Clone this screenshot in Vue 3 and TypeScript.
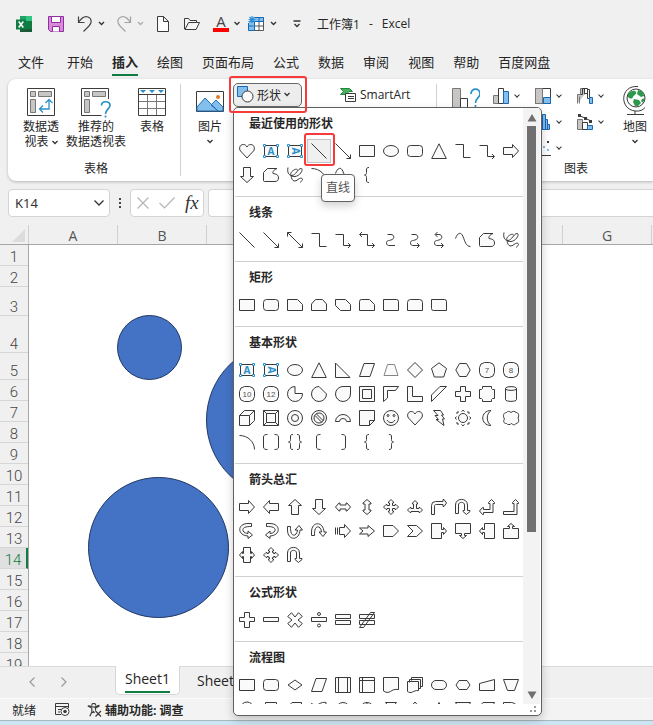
<script setup lang="ts">
import { ref } from 'vue'

interface Shape {
  label: string
  d: string
  turn?: string
  kind?: 'open' | 'box' | 'vbox' | 'soft'
  num?: string
}

const RECT = 'M.5 2.5h15v11h-15z'
const ROUND = 'M3.5 2.5h9a3 3 0 0 1 3 3v5a3 3 0 0 1-3 3h-9a3 3 0 0 1-3-3v-5a3 3 0 0 1 3-3z'
const OCT = 'M5.5.5h5l3.500 1.500 1.500 3.500v5l-1.500 3.500-3.500 1.500h-5L2 14 .5 10.500v-5L2 2z'
const CROSS = 'M5.5.5h5v5h5v5h-5v5h-5v-5h-5v-5h5z'
const ARROW = 'M.5 4.5h9v-3l6 6.5-6 6.5v-3h-9z'
const TWO_WAY = 'M.5 8L4 4h1v2h6V4h1l3.500 4-3.500 4h-1v-2H5v2H4z'
const UTURN = 'M.5 14.5V6c0-7.500 12-7.500 12 0v5.500H15v1l-3.500 3-3.500-3v-1h1.500V6c0-3.500-6-3.500-6 0v8.500z'
const CALLOUT = 'M.5.5h10v6h2v-2l3 3.5-3 3.5v-2h-2v6H.5z'
const CURVED = 'M12.5.5H9C-2 .5-2 12.500 9 13v2.500L13.500 12 9 8v2.500C3.500 10 2.500 6 5.500 4.500 7.500 3.500 10 3.500 12.500 3.500z'
const HEART = 'M8 15L1.500 8C-.5 5.500 1 1.500 4.200 1.500 6 1.500 7.300 2.500 8 4 8.700 2.500 10 1.500 11.800 1.500 15 1.500 16.500 5.500 14.500 8z'
const CIRCLE = 'M.5 8a7.500 7.500 0 1 0 15 0a7.500 7.500 0 1 0-15 0z'
const S_CURVE = 'M4.500 2.500H8c3.500 0 4 4.500 0 5.500s-4.500 1-4.500 3 1.500 2.500 2.500 2.500H12'

const s = (label: string, d: string, kind?: Shape['kind'], turn?: string, num?: string): Shape => ({ label, d, kind, turn, num })

const heart = s('心形', HEART)
const box = s('文本框', '', 'box')
const vbox = s('竖排文本框', '', 'vbox')
const line = s('直线', 'M.5.5l15 15', 'open')
const lineArrow = s('直线箭头', 'M.5.5l15 15M15.500 11.500v4h-4', 'open')
const rect = s('矩形', RECT)
const ellipse = s('椭圆', 'M.5 8a7.500 5.500 0 1 0 15 0a7.500 5.500 0 1 0-15 0z')
const rounded = s('圆角矩形', ROUND)
const triangle = s('等腰三角形', 'M8 .8l7.300 14.700H.7z')
const elbow = s('连接符: 肘形', 'M.5 1.500h8v13h7', 'open')
const elbowArrow = s('连接符: 肘形箭头', 'M.5 2.500h8v11h6.500M13 11l2.500 2.500-2.500 2.500', 'open')
const right = s('箭头: 右', ARROW)
const down = s('箭头: 下', ARROW, undefined, 'rotate(90 8 8)')
const freeform = s('任意多边形: 形状', 'M.5 5.500l4-4h9.500C10.500 3 9.500 5 10 6.500c3 .5 5.500 1 5.500 4.500 0 2.500-1.500 3.500-3.500 3.500H1.500a1 1 0 0 1-1-1z')
const scribble = s('任意多边形: 自由曲线', 'M1 .5C0 5 1.500 8.500 5 8.500S11 1.500 14 1.500 13.500 9 8 9.500 3 6 5.500 4 10 1.500 11 3.500M4 8.500c1 7 4.500 6 7 4s4.500-1.500 4.500 0-2 1.500-2 3', 'open')
const arc = s('弧形', 'M.5 1.500C9 1.500 15.500 8 15.500 15.500', 'open')
const curve = s('曲线', 'M.5 6.500C2.500.5 6-.5 8 4.500S11 14.500 15.500 14.500', 'open')
const leftBrace = s('左大括号', 'M10 .5C7.500.5 7.500 1.500 7.500 3v2.500c0 1.500-.5 2.500-2 2.500 1.500 0 2 1 2 2.500V13c0 1.500 0 2.500 2.500 2.500', 'open')
const rightBrace = s('右大括号', leftBrace.d, 'open', 'rotate(180 8 8)')
const uturn = s('箭头: 手杖形', UTURN)

const sections: { title: string; shapes: Shape[] }[] = [
  {
    title: '最近使用的形状',
    shapes: [heart, box, vbox, line, lineArrow, rect, ellipse, rounded, triangle, elbow, elbowArrow, right,
      down, freeform, scribble, arc, curve, leftBrace],
  },
  {
    title: '线条',
    shapes: [line, lineArrow,
      s('双箭头直线', 'M.5.5l15 15M15.500 11.500v4h-4M.5 4.500v-4h4', 'open'),
      elbow, elbowArrow,
      s('连接符: 肘形双箭头', 'M1 2.500h7.500v11h6.500M13 11l2.500 2.500-2.500 2.500M3 0L.5 2.500 3 5', 'open'),
      s('连接符: 曲线', S_CURVE, 'open'),
      s('连接符: 曲线箭头', S_CURVE + 'M10 11l2.500 2.500L10 16', 'open'),
      s('连接符: 曲线双箭头', S_CURVE + 'M10 11l2.500 2.500L10 16M6.500 0L4 2.500 6.500 5', 'open'),
      curve, freeform, scribble],
  },
  {
    title: '矩形',
    shapes: [rect, rounded,
      s('剪去单角', 'M.5 2.500h10l5 5v6h-15z'),
      s('剪去顶角', 'M4.500 2.500h7l4 4.500v6.500H.5V7z'),
      s('剪去对角', 'M.5 2.500h10l5 5v6h-10l-5-5z'),
      s('一个圆顶角,剪去另一个顶角', 'M2.500 2.500h8l5 5v6h-15v-9a2 2 0 0 1 2-2z'),
      s('单圆角', 'M.5 2.500h13a2 2 0 0 1 2 2v9h-15z'),
      s('圆顶角', 'M3.500 2.500h9a3 3 0 0 1 3 3v8H.5v-8a3 3 0 0 1 3-3z'),
      s('对角圆角', 'M.5 2.500h13a2 2 0 0 1 2 2v9h-13a2 2 0 0 1-2-2z')],
  },
  {
    title: '基本形状',
    shapes: [box, vbox, ellipse, triangle,
      s('直角三角形', 'M.5 1v14.500h14.500z'),
      s('平行四边形', 'M5 1.500h10.500l-4.500 13H.5z'),
      s('梯形', 'M4.500 2.500h7l3.500 11H1z', 'soft'),
      s('菱形', 'M8 .5L15.500 8 8 15.500.5 8z'),
      s('五边形', 'M8 .8l7.500 5.700L12.700 15H3.300L.5 6.500z'),
      s('六边形', 'M4.500 1.500h7L15.200 8l-3.700 6.500h-7L.8 8z'),
      s('七边形', OCT, undefined, undefined, '7'),
      s('八边形', OCT, undefined, undefined, '8'),
      s('十边形', OCT, undefined, undefined, '10'),
      s('十二边形', OCT, undefined, undefined, '12'),
      s('不完整圆', 'M8 7.500h7.500A7.500 7.500 0 1 1 8 .5z'),
      s('弦形', 'M8 .5l7.500 7.500A7.500 7.500 0 1 1 8 .5z'),
      s('泪滴形', 'M8 .5h7.500V8A7.500 7.500 0 1 1 8 .5z'),
      s('图文框', 'M.5.5h15v15H.5zM3.500 3.500h9v9h-9z'),
      s('半闭框', 'M.5.5h15l-3 4H4.500V12l-4 3.500z'),
      s('L 形', 'M.5.5h5v10h10v5H.5z'),
      s('斜纹', 'M9 .5h6.500L.5 15.500V9z'),
      s('十字形', CROSS),
      s('缺角矩形', 'M3.500.5h9v2l1 1h2v9h-2l-1 1v2h-9v-2l-1-1h-2v-9h2l1-1z'),
      s('圆柱体', 'M2.500 2.500v11c0 2.500 11 2.500 11 0v-11c0-2.500-11-2.500-11 0c0 2.500 11 2.500 11 0'),
      s('立方体', 'M.5 5.500l5-5h10v10l-5 5H.5zM.5 5.500h10v10M10.500 5.500l5-5'),
      s('棱台', 'M.5.5h15v15H.5zM3.500 3.500h9v9h-9zM.5.5l3 3M15.500.5l-3 3M.5 15.500l3-3M15.500 15.500l-3-3'),
      s('圆: 空心', CIRCLE + 'M4.500 8a3.500 3.500 0 1 0 7 0a3.500 3.500 0 1 0-7 0z'),
      s('禁止符', CIRCLE + 'M3 8a5 5 0 1 0 10 0a5 5 0 1 0-10 0zM4 5.500L11 12.500M5.500 4L12.500 11'),
      s('空心弧', 'M.5 11.500a7.500 7 0 0 1 15 0h-4a3.500 3 0 0 0-7 0z'),
      s('矩形: 折角', 'M.5.5h15v10l-5 5H.5zM10.500 15.500v-5h5'),
      s('笑脸', CIRCLE + 'M4 5.500a1 1 0 1 0 2 0a1 1 0 1 0-2 0zM10 5.500a1 1 0 1 0 2 0a1 1 0 1 0-2 0zM4 10c2 3.500 6 3.500 8 0'),
      heart,
      s('闪电形', 'M6 .5h3.500l3 4.500h-2l3 4h-2l1.500 6.500L5 9.500h2.500L4 5.500h3L2.500.5z'),
      s('太阳形', 'M3.500 8a4.500 4.500 0 1 0 9 0a4.500 4.500 0 1 0-9 0zM6.500 1.500L8 .2l1.500 1.300M6.500 14.500L8 15.800l1.500-1.300M1.500 6.500L.2 8l1.300 1.500M14.500 6.500L15.800 8l-1.300 1.500M2 4V2h2M12 2h2v2M2 12v2h2M12 14h2v-2'),
      s('新月形', 'M12 .5C7 4 7 12 12 15.500 1 15.500 1 .5 12 .5z'),
      s('云形', 'M3.500 13.500C.5 13.500 0 11 1.500 9-.5 6 .5 2.500 3.500 2.500c1-1.500 3-1.500 4.500 0 1.500-1.500 4-1.500 5 0 2.500 0 3.500 3 2 5.500 1.500 2.500.5 5.500-2 5.500-1 2-3 1.500-4.500 0-1.500 1.500-4 1.500-5 0z'),
      arc,
      s('双括号', 'M4.500.5C2 .5.500 1 .500 3v10c0 2 1.500 2.500 4 2.500M11.500.5c2.500 0 4 .5 4 2.500v10c0 2-1.500 2.500-4 2.500', 'open'),
      s('双大括号', 'M6 .5C3.500.5 3.500 1.500 3.500 3v2.500C3.500 7 3 8 1.500 8c1.500 0 2 1 2 2.500V13c0 1.500 0 2.500 2.500 2.500M10 .5c2.500 0 2.500 1 2.500 2.500v2.500c0 1.500.5 2.500 2 2.500-1.500 0-2 1-2 2.500V13c0 1.500 0 2.500-2.500 2.500', 'open'),
      s('左中括号', 'M9.500.5C7 .5 5.500 1 5.500 3v10c0 2 1.500 2.500 4 2.500', 'open'),
      s('右中括号', 'M6.500.5C9 .5 10.500 1 10.500 3v10c0 2-1.500 2.500-4 2.500', 'open'),
      leftBrace, rightBrace],
  },
  {
    title: '箭头总汇',
    shapes: [right,
      s('箭头: 左', ARROW, undefined, 'rotate(180 8 8)'),
      s('箭头: 上', ARROW, undefined, 'rotate(270 8 8)'),
      down,
      s('箭头: 左右', TWO_WAY),
      s('箭头: 上下', TWO_WAY, undefined, 'rotate(90 8 8)'),
      s('箭头: 十字', 'M8 .5L10.500 3v1h-1v2.500H12v-1h1L15.500 8 13 10.500h-1v-1H9.500V12h1v1L8 15.500 5.500 13v-1h1V9.500H4v1H3L.5 8 3 5.500h1v1h2.500V4h-1V3z'),
      s('箭头: 丁字', 'M8 1.500L10.500 4v1h-1v4.500H12v-1h1l2.500 2.500-2.500 2.500h-1v-1H4v1H3L.5 11 3 8.500h1v1h2.500V5h-1V4z'),
      s('箭头: 圆角右', 'M.5 15.500V6.500a4 4 0 0 1 4-4H12v-2h1L15.500 4 13 7.500h-1v-2H5.500c-1.500 0-2 .5-2 2v8z'),
      uturn,
      s('箭头: 直角双向', 'M12.500.5l3 3v1h-1.500v9H4.500v2h-1L.5 12l3-3.500h1v2h6.500v-6H9.500v-1z'),
      s('箭头: 直角上', 'M12.500.5l3 3v1h-1.500v11H.5v-3H11v-8H9.500v-1z'),
      s('箭头: 右弧形', CURVED),
      s('箭头: 左弧形', CURVED, undefined, 'matrix(-1 0 0 1 16 0)'),
      s('箭头: 上弧形', CURVED, undefined, 'rotate(270 8 8)'),
      s('箭头: 下弧形', CURVED, undefined, 'matrix(0 1 1 0 0 0)'),
      s('箭头: 虚尾', 'M.5 4.500v7M2.500 4.500v7M4.500 4.500h5v-3l6 6.500-6 6.500v-3h-5z'),
      s('箭头: 燕尾形', 'M.5 5h8.500V2.500l6.500 5.500L9 13.500V11H.5L4 8z'),
      s('箭头: 五边形', 'M.5 2.500h9.500L15.500 8 10 13.500H.5z'),
      s('箭头: V 形', 'M.5 2.500h9L15.500 8l-6 5.500h-9L6 8z'),
      s('标注: 右箭头', CALLOUT),
      s('标注: 下箭头', CALLOUT, undefined, 'rotate(90 8 8)'),
      s('标注: 左箭头', CALLOUT, undefined, 'rotate(180 8 8)'),
      s('标注: 上箭头', CALLOUT, undefined, 'rotate(270 8 8)'),
      s('标注: 左右箭头', 'M4.500.5h7v6h1v-2l3 3.500-3 3.500v-2h-1v6h-7v-6h-1v2L.5 8l3-3.500v2h1z'),
      s('标注: 十字箭头', 'M8 .5L10.500 3v1h-1v1.500h1v1H12v-1h1L15.500 8 13 10.500h-1v-1h-1.500v1h-1V12h1v1L8 15.500 5.500 13v-1h1v-1.500h-1v-1H4v1H3L.5 8 3 5.500h1v1h1.500v-1h1V4h-1V3z'),
      s('箭头: 环形', UTURN)],
  },
  {
    title: '公式形状',
    shapes: [
      s('加号', 'M5.500.5h5v5h5v4h-5v6h-5v-6h-5v-4h5z'),
      s('减号', 'M.5 5.500h15v4H.5z'),
      s('乘号', 'M8 5l3.500-4.300L15.300 4.500 11 8l4.300 3.500-3.800 3.800L8 11l-3.500 4.300L.7 11.500 5 8 .7 4.500 4.500.7z'),
      s('除号', 'M.5 5.500h15v4H.5zM6.500 2a1.500 1.500 0 1 0 3 0a1.500 1.500 0 1 0-3 0zM6.500 13.500a1.500 1.500 0 1 0 3 0a1.500 1.500 0 1 0-3 0z'),
      s('等号', 'M.5 2.500h15v4H.5zM.5 8.500h15v4H.5z'),
      s('不等号', 'M.5 2.500h15v4H.5zM.5 8.500h15v4H.5zM11.500.5h4l-11 15h-4z')],
  },
  {
    title: '流程图',
    shapes: [
      s('流程图: 过程', RECT),
      s('流程图: 可选过程', ROUND),
      s('流程图: 决策', 'M8 3l7 5-7 5-7-5z'),
      s('流程图: 数据', 'M5 1.500h10.500l-4.500 13H.5z'),
      s('流程图: 预定义过程', 'M.5.5h15v15H.5zM3.500.5v15M12.500.5v15'),
      s('流程图: 内部贮存', 'M.5.5h15v15H.5zM3.500.5v15M.5 3.500h15'),
      s('流程图: 文档', 'M.5.5h15v12c-4-.5-6 .5-8 2s-5 1-7-.5z'),
      s('流程图: 多文档', 'M4.500 3.500v-3h11v9h-2M2.500 5.500v-3h11v9h-2M.5 4.500h11v9c-3 0-4 .5-6 1.500s-3.500.5-5-.5z'),
      s('流程图: 终止', 'M5 3.500h6a4.500 4.500 0 0 1 0 9H5a4.500 4.500 0 0 1 0-9z'),
      s('流程图: 准备', 'M4 3.500h8l3 4.500-3 4.500H4L1 8z'),
      s('流程图: 手动输入', 'M.5 6.500l15-4v11H.5z'),
      s('流程图: 手动操作', 'M.5 2.500h15l-4 11h-7z'),
      s('流程图: 接点', 'M1.500 7.500a6.500 6.500 0 1 0 13 0a6.500 6.500 0 1 0-13 0z'),
      s('流程图: 离页连接符', 'M2.500 1.500h11v8L8 13.500l-5.500-4z'),
      s('流程图: 卡片', 'M5 1.500h9.500v13H1.500V5z'),
      s('流程图: 资料带', 'M.5 2.500c3 2 5 2 7.500.5s4.500-2 7-1.500v12H.5z'),
      s('流程图: 汇总连接', 'M1.500 8a6.500 6.500 0 1 0 13 0a6.500 6.500 0 1 0-13 0z'),
      s('流程图: 或者', 'M1.500 8a6.500 6.500 0 1 0 13 0a6.500 6.500 0 1 0-13 0zM8 1.500v13'),
      s('流程图: 对照', 'M2.500 1.500h11l-11 13h11z'),
      s('流程图: 排序', 'M8 1l6 7-6 7-6-7z'),
      s('流程图: 摘录', 'M8 1.500l6 13H2z'),
      s('流程图: 合并', 'M.5 1.500h15l-7.500 13z'),
      s('流程图: 库存数据', 'M4 1.500h11.500c-2 3-2 8 0 13H4c-4-4-4-9 0-13z'),
      s('流程图: 延期', 'M.5 1.500h8c8 1 8 12 0 13h-8z')],
  },
]

const tabs = ['文件', '开始', '插入', '绘图', '页面布局', '公式', '数据', '审阅', '视图', '帮助', '百度网盘']
const activeTab = ref('插入')
const cell = ref('K14')
const formula = ref('')
const columns = ['A', 'B', 'C', 'D', 'E', 'F', 'G']
const rows = Array.from({ length: 19 }, (_, i) => i + 1)
</script>

<template>
  <div class="app">
    <header class="title">
      <svg class="logo" width="16" height="16" viewBox="0 0 16 16" aria-hidden="true">
        <path fill="#21a366" d="M4 0h12v5H4z" /><path fill="#33c481" d="M10 0h6v5h-6z" />
        <path fill="#107c41" d="M4 5h12v6H4z" /><path fill="#185c37" d="M4 10h12v6H4z" /><path fill="#107c41" d="M10 9h6v4h-6z" />
        <path fill="#107c41" d="M0 3.500h10v10H0z" /><path stroke="#fff" stroke-width="1.600" d="M2.700 5.500l4.600 6M7.300 5.500l-4.600 6" />
      </svg>
      <button class="tool save" aria-label="保存">
        <svg width="16" height="16" viewBox="0 0 16 16"><path fill="#d88adb" stroke="#922fa0" d="M.5.5h15v15h-13l-2-2z" /><path fill="#fff" stroke="#922fa0" d="M3.500.5h9v6h-9zM4.500 15.500v-5h7v5" /></svg>
      </button>
      <button class="tool undo" aria-label="撤消">
        <svg width="28" height="16" viewBox="0 0 28 16"><path fill="none" stroke="#444" stroke-width="1.200" d="M1.500.5v6h6M1.500 6.500C4 2.500 7-.500 11 1c4 1.500 4 6 1 9l-5.500 5.500" /><path class="chev" d="M22 6l2.500 2.500L27 6" /></svg>
      </button>
      <button class="tool redo" aria-label="恢复">
        <svg width="28" height="16" viewBox="0 0 28 16"><path fill="none" stroke="#a2a2a2" stroke-width="1.200" d="M14.500.5v6h-6M14.500 6.500C12 2.500 9-.500 5 1c-4 1.500-4 6-1 9l5.500 5.500" /><path fill="none" stroke="#b0b0b0" stroke-width="1.500" d="M22 6l2.500 2.500L27 6" /></svg>
      </button>
      <button class="tool new" aria-label="新建">
        <svg width="12" height="16" viewBox="0 0 12 16"><path fill="#fcfcfc" stroke="#3b3b3b" d="M.5.5h6l5 5v10H.5zM6.500.5v5h5" /></svg>
      </button>
      <button class="tool open" aria-label="打开">
        <svg width="16" height="14" viewBox="0 0 16 14"><path fill="#f8f8f8" stroke="#3b3b3b" d="M.5 12V1.500h4l1.500 2h6.500v2H4.500l-3.500 7h11l3.500-7h-3" /></svg>
      </button>
      <button class="tool font-color" aria-label="字体颜色">
        <span class="letter">A</span>
        <svg width="6" height="5" viewBox="0 0 6 5"><path class="chev" d="M.5 1L3 3.500 5.500 1" /></svg>
      </button>
      <button class="tool freeze" aria-label="冻结窗格">
        <svg width="29" height="16" viewBox="0 0 29 16"><path fill="#83beec" d="M6 1h10v4H6zM1 6h5v9H1z" /><path fill="#fff" d="M6 5h10v10H6z" /><path fill="none" stroke="#555" d="M6.500 5.500h9v9h-9zM6 10h10M11 5v10" /><path fill="none" stroke="#1769b4" d="M7 1.500h8.500v4H.5M.5 7v7.500h6v-8M.5 10h5M11 1v4" /><path stroke="#2b8fd6" stroke-width="1.200" d="M4 0v7M.5 3.500h7M1.500 1l5 5M6.500 1l-5 5" /><path class="chev" d="M23 6l2.500 2.500L28 6" /></svg>
      </button>
      <button class="tool more" aria-label="自定义快速访问工具栏">
        <svg width="8" height="8" viewBox="0 0 8 8"><path class="chev" d="M.5 1h7M1.500 4L4 6.500 6.500 4" /></svg>
      </button>
      <span class="doc">工作簿1</span><span class="dash">-</span><span>Excel</span>
    </header>

    <nav class="tabs">
      <button v-for="t in tabs" :key="t" class="tab" :class="{ active: t === activeTab }" @click="activeTab = t">{{ t }}</button>
    </nav>

    <section class="ribbon">
      <div class="group tables">
        <div class="tools">
          <button class="big pivot">
            <svg width="28" height="28" viewBox="0 0 28 28"><path fill="#fff" stroke="#3b3b3b" d="M.5.5h27v27H.5z" /><path fill="#c8c6c4" stroke="#797775" d="M3.500 3.500h5v5h-5zM11.500 3.500h13v5h-13zM3.500 11.500h5v13h-5z" /><path fill="none" stroke="#2b8fc9" stroke-width="1.300" d="M22 12v9h-9M18.500 15l3.500-3.500 3.500 3.500M16 17.500L12.500 21l3.500 3.500" /></svg>
            <span>数据透<br>视表 <svg class="inline" width="6" height="5" viewBox="0 0 6 5"><path class="chev" d="M.5 1L3 3.500 5.500 1" /></svg></span>
          </button>
          <button class="big recommended">
            <svg width="30" height="30" viewBox="0 0 30 30"><path fill="#fff" stroke="#3b3b3b" d="M27.500 11V.5H.5v27h20" /><path fill="#c8c6c4" stroke="#797775" d="M3.500 3.500h5v5h-5zM11.500 3.500h13v5h-13zM3.500 11.500h5v13h-5z" /><path fill="none" stroke="#2b8fc9" stroke-width="1.700" d="M20.500 17.500c0-5 8.500-5 8.500 0 0 3-4.500 4-4.500 8.500M24.500 27.500v2" /></svg>
            <span>推荐的<br>数据透视表</span>
          </button>
          <button class="big grid">
            <svg width="28" height="28" viewBox="0 0 28 28"><path fill="#fff" stroke="#3b3b3b" d="M.5.5h27v27H.5zM.5 6.500h27" /><path stroke="#797775" fill="none" d="M9.500 7v20M18.500 7v20M1 13.500h26M1 20.500h26" /><path fill="#2b8fc9" d="M2 2h6L5 5zM11 2h6l-3 3zM20 2h6l-3 3z" /></svg>
            <span>表格</span>
          </button>
        </div>
        <div class="caption">表格</div>
      </div>

      <div class="group illustrations">
        <button class="big picture">
          <svg width="28" height="28" viewBox="0 0 28 28"><path fill="#fff" stroke="#3b3b3b" d="M.5 3.500h27v20H.5z" /><path fill="#83beec" stroke="#2270b5" d="M1 19l8-9 13 13H1zM15 17l5-5 7 7v4h-5z" /><circle cx="22" cy="9" r="2" fill="#e07a1f" /></svg>
          <span>图片</span>
          <svg class="drop" width="6" height="5" viewBox="0 0 6 5"><path class="chev" d="M.5 1L3 3.500 5.500 1" /></svg>
        </button>

        <div class="menu-anchor">
          <button class="shapes-button" aria-haspopup="true" aria-expanded="true">
            <svg width="17" height="17" viewBox="0 0 17 17"><path fill="#83beec" stroke="#1769b4" d="M.5.5h10v10H.5z" /><circle cx="10.500" cy="10.500" r="5.500" fill="#fafafa" stroke="#3b3b3b" /></svg>
            <span>形状</span>
            <svg width="6" height="5" viewBox="0 0 6 5"><path class="chev" d="M.5 1L3 3.500 5.500 1" /></svg>
          </button>
          <div class="callout-box"></div>

          <div class="menu">
            <div class="menu-body">
              <div class="menu-list">
                <section v-for="(sec, si) in sections" :key="sec.title" class="shape-section">
                  <h2>{{ sec.title }}</h2>
                  <div class="shape-grid">
                    <button v-for="(sh, i) in sec.shapes" :key="i" class="shape" :class="{ hovered: si === 0 && i === 3 }" :aria-label="sh.label">
                      <svg width="16" height="16" viewBox="0 0 16 16">
                        <template v-if="sh.kind === 'box' || sh.kind === 'vbox'">
                          <path class="outline" d="M1.500 2.500h13v11h-13z" />
                          <path class="corner" d="M.5 1.500h2v2h-2zM13.500 1.500h2v2h-2zM.5 12.500h2v2h-2zM13.500 12.500h2v2h-2z" />
                          <text class="box-letter" x="8" y="11.500" :transform="sh.kind === 'vbox' ? 'rotate(90 8 8)' : undefined">A</text>
                        </template>
                        <path v-else :class="['outline', sh.kind]" :d="sh.d" :transform="sh.turn" />
                        <text v-if="sh.num" class="num" x="8" y="11">{{ sh.num }}</text>
                      </svg>
                      <template v-if="si === 0 && i === 3">
                        <span class="shape-mark"></span>
                        <span class="tip" role="tooltip">直线</span>
                      </template>
                    </button>
                  </div>
                </section>
              </div>
              <div class="scrollbar">
                <svg width="10" height="8" viewBox="0 0 10 8"><path fill="#707070" d="M5 0l4.500 7.500h-9z" /></svg>
                <div class="thumb"></div>
                <svg width="10" height="8" viewBox="0 0 10 8"><path fill="#707070" d="M5 8L.5.500h9z" /></svg>
              </div>
            </div>
            <div class="grip">
              <svg width="8" height="8" viewBox="0 0 8 8"><path fill="#9a9a9a" d="M5 0h2v2H5zM5 4h2v2H5zM1 4h2v2H1z" /></svg>
            </div>
          </div>
        </div>

        <button class="smartart">
          <svg width="16" height="14" viewBox="0 0 16 14"><path fill="#4bb05d" stroke="#1f8a3b" d="M.5.5h9l3 3H9l-3 3H.5l3-3z" /><path fill="#fff" stroke="#3b3b3b" d="M5.500 5.500h10v8h-10zM8 8.500h6M8 10.500h6" /></svg>
          <span>SmartArt</span>
        </button>
      </div>

      <div class="group charts">
        <div class="tools">
          <button class="big recommend-chart" aria-label="推荐的图表">
            <svg width="28" height="28" viewBox="0 0 28 28"><path fill="#c8c6c4" stroke="#797775" d="M.5.5h8v27h-8z" /><path fill="#fff" stroke="#3b3b3b" d="M8.500 10.500h7v17h-7z" /><path fill="none" stroke="#2b8fc9" stroke-width="1.700" d="M19 6c0-6.500 9-6.500 9 0 0 3.500-4.500 4-4.500 9M23.500 17v2" /></svg>
          </button>
          <div class="chart-grid">
            <button class="chart" aria-label="柱形图"><svg width="16" height="16" viewBox="0 0 16 16"><path fill="#c8c6c4" stroke="#797775" d="M.5 7.500h5v8h-5z" /><path fill="#fff" stroke="#3b3b3b" d="M5.500.5h5v15h-5z" /><path fill="#83beec" stroke="#1769b4" d="M10.500 3.500h5v12h-5z" /></svg><i></i></button>
            <button class="chart" aria-label="层次结构图"><svg width="16" height="16" viewBox="0 0 16 16"><path fill="#fff" stroke="#3b3b3b" d="M.5.5h15v15H.5z" /><path fill="#c8c6c4" stroke="#797775" d="M.5.5h7v15h-7z" /><path fill="#83beec" stroke="#1769b4" d="M8.500 9.500h7v6h-7z" /></svg><i></i></button>
            <button class="chart" aria-label="瀑布图"><svg width="16" height="16" viewBox="0 0 16 16"><path fill="#c8c6c4" stroke="#797775" d="M.5 15.500v-9h3v-6h4v6M2.500 15.500v-7" /><path fill="none" stroke="#3b3b3b" d="M7.500 0v5.500h3v5h2M10.500 6V.5h-5v6h-2M12.500 10V1.500h-2" /><path fill="#83beec" stroke="#1769b4" d="M12.500 9.500h3v6h-3z" /></svg><i></i></button>
            <button class="chart" aria-label="折线图"><svg width="16" height="16" viewBox="0 0 16 16"><path fill="none" stroke="#3b3b3b" d="M.5 12l5-7 5 5 5-8" /></svg><i></i></button>
            <button class="chart" aria-label="统计图表"><svg width="16" height="16" viewBox="0 0 16 16"><path fill="#83beec" stroke="#1769b4" d="M1.500 10.500h3v5h-3zM4.500 4.500h3v11h-3zM7.500.5h3v15h-3zM10.500 5.500h2v10h-2zM12.500 10.500h2v5h-2z" /></svg><i></i></button>
            <button class="chart" aria-label="组合图"><svg width="16" height="16" viewBox="0 0 16 16"><path fill="#c8c6c4" stroke="#797775" d="M.5 5.500h5v10h-5z" /><path fill="#fff" stroke="#3b3b3b" d="M5.500 8.500h5v7h-5z" /><path fill="#83beec" stroke="#1769b4" d="M10.500 11.500h5v4h-5z" /><path fill="none" stroke="#3b3b3b" d="M2 1.500l6 2.500 6 3" /><path fill="#3b3b3b" d="M1 0h3v3H1zM7 3h3v3H7zM12 6h3v3h-3z" /></svg><i></i></button>
            <button class="chart" aria-label="饼图"><svg width="16" height="16" viewBox="0 0 16 16"><circle cx="8" cy="8" r="7" fill="#83beec" stroke="#1769b4" /></svg><i></i></button>
            <button class="chart" aria-label="散点图"><svg width="16" height="16" viewBox="0 0 16 16"><path stroke="#3b3b3b" fill="none" d="M.5 0v15.500H16" /><path fill="#83beec" d="M8 6h2v2H8zM12 9h2v2h-2zM5 10h2v2H5z" /><path fill="#3b3b3b" d="M12 1h2v2h-2z" /></svg><i></i></button>
          </div>
          <button class="big map">
            <svg width="28" height="30" viewBox="0 0 28 30"><circle cx="15" cy="12" r="9" fill="#fff" stroke="#3b3b3b" /><path fill="#2d9a4b" d="M7 8c3-4 7-4 8-2s-2 3-3 5-3 2-5 0zM17 4c4 0 6 3 6 6l-3 1-4-3zM13 13l5 1 2 3-3 3h-3l-2-4zM21 13l3-1-2 5-2-2z" /><path fill="none" stroke="#3b3b3b" d="M17 .5C-1-1-2 23 14 25c5 .5 8-1 10-3.500M14 25v4M6 28.500h17" /></svg>
            <span>地图</span>
            <svg class="drop" width="6" height="5" viewBox="0 0 6 5"><path class="chev" d="M.5 1L3 3.500 5.500 1" /></svg>
          </button>
        </div>
        <div class="caption">图表</div>
      </div>
    </section>

    <section class="formula-bar">
      <div class="name-box">
        <input v-model="cell" aria-label="名称框">
        <svg width="10" height="6" viewBox="0 0 10 6"><path class="chev" d="M.5.5L5 5 9.500.5" /></svg>
      </div>
      <svg class="dots" width="2" height="11" viewBox="0 0 2 11"><path fill="#444" d="M0 0h2v2H0zM0 4h2v2H0zM0 8h2v2H0z" /></svg>
      <div class="fx-box">
        <button aria-label="取消"><svg width="12" height="12" viewBox="0 0 12 12"><path fill="none" stroke="#b5b5b5" stroke-width="1.200" d="M.5.5l11 11M11.500.5l-11 11" /></svg></button>
        <button aria-label="输入"><svg width="16" height="12" viewBox="0 0 16 12"><path fill="none" stroke="#b5b5b5" stroke-width="1.200" d="M.5 6l5 5 10-10.500" /></svg></button>
        <button class="fx">fx</button>
      </div>
      <input v-model="formula" class="formula" aria-label="编辑栏">
    </section>

    <main class="sheet">
      <div class="col-heads">
        <div class="corner-head"><svg width="13" height="13" viewBox="0 0 13 13"><path fill="#dcdcdc" d="M13 0v13H0z" /></svg></div>
        <div v-for="c in columns" :key="c" class="col-head">{{ c }}</div>
      </div>
      <div class="grid-body">
        <div class="row-heads">
          <div v-for="r in rows" :key="r" class="row-head" :class="['r' + r, { current: r === 14 }]">{{ r }}</div>
        </div>
        <div class="canvas">
          <div class="disc small"></div>
          <div class="disc medium"></div>
          <div class="disc large"></div>
        </div>
      </div>
    </main>

    <footer>
      <div class="sheet-tabs">
        <button class="nav-arrow" aria-label="上一个"><svg width="6" height="10" viewBox="0 0 6 10"><path d="M5.500.5L1 5l4.500 4.500" /></svg></button>
        <button class="nav-arrow" aria-label="下一个"><svg width="6" height="10" viewBox="0 0 6 10"><path d="M.5.5L5 5 .5 9.500" /></svg></button>
        <button class="sheet-tab active"><span>Sheet1</span></button>
        <button class="sheet-tab"><span>Sheet2</span></button>
      </div>
      <div class="status">
        <span>就绪</span>
        <svg width="15" height="13" viewBox="0 0 15 13"><path fill="none" stroke="#3b3b3b" d="M6 11.500H.5V.5h13V5M.5 3.500h13M3 6.500h3M3 9h2" /><circle cx="10" cy="8.500" r="4" fill="#fff" stroke="#3b3b3b" /><circle cx="10" cy="8.500" r="1.800" fill="#3b3b3b" /></svg>
        <svg width="15" height="14" viewBox="0 0 15 14"><path fill="none" stroke="#3b3b3b" stroke-width="1.200" d="M5 2.500a1.800 1.800 0 1 1 3.500 0M.8 3l4 2v4l-2 4.200M12.500 3l-4 2v2.500M1 3c1-1 3 .5 5.500 1s4.500-2 6-1.500M5.500 10l1-1.500 1 1.500M8.500 8l5.500 5.500M14 8l-5.500 5.500" /></svg>
        <strong>辅助功能: 调查</strong>
      </div>
      <div class="desktop"></div>
    </footer>
  </div>
</template>

<style>
body { margin: 0; }
</style>

<style scoped>
* { box-sizing: border-box; }
.app {
  display: flex;
  flex-direction: column;
  height: 100vh;
  overflow: hidden;
  background: #f0f0f0;
  color: #262626;
  font-family: "Open Sans", "Noto Sans CJK SC", sans-serif;
  font-size: 12px;
}
button { padding: 0; border: 0; background: none; color: inherit; font: inherit; }
input { min-width: 0; border: 0; outline: 0; font: inherit; }
svg { display: block; flex: none; }
.chev { fill: none; stroke: #333; stroke-width: 1.3; }

.title { display: flex; align-items: center; height: 47px; padding-left: 16px; flex: none; }
.save { margin-left: 16px; }
.undo { margin-left: 13px; }
.redo { margin-left: 11px; }
.new { margin-left: 13px; }
.open { margin-left: 15px; }
.font-color { display: flex; align-items: center; gap: 5px; margin-left: 13px; }
.letter { width: 16px; height: 17px; border-bottom: 4px solid #f00; font-size: 15px; line-height: 12px; text-align: center; color: #444; }
.freeze { margin-left: 8px; }
.more { margin-left: 16px; }
.doc { margin-left: 16px; }
.dash { margin: 0 9px; }

.tabs { display: flex; flex: none; gap: 19px; height: 32px; padding-left: 18px; font-size: 13px; }
.tab { height: 29px; line-height: 31px; white-space: nowrap; }
.tab:first-child { margin-right: 4px; }
.tab.active { font-weight: 700; border-bottom: 2px solid #107c41; }

.ribbon {
  display: flex;
  flex: none;
  height: 102px;
  margin-left: 8px;
  padding-top: 5px;
  border-radius: 8px 0 0 8px;
  background: #fff;
  box-shadow: 0 1px 3px rgba(0, 0, 0, .25);
}
.group { display: flex; flex-direction: column; flex: none; height: 92px; }
.tables { width: 173px; border-right: 1px solid #d0d0d0; }
.tools { display: flex; height: 77px; }
.big { display: flex; flex-direction: column; align-items: center; line-height: 15px; padding-top: 4px; text-align: center; white-space: nowrap; }
.big > span { margin-top: 3px; }
.pivot { width: 42px; margin-left: 12px; }
.recommended { width: 68px; }
.recommended > span { margin-top: 1px; }
.grid { width: 44px; }
.inline { display: inline-block; vertical-align: middle; }
.drop { margin-top: 5px; }
.caption { height: 15px; line-height: 15px; text-align: center; }
.tables .caption { padding-left: 4px; }
.illustrations { flex-direction: row; align-items: flex-start; width: 256px; border-right: 1px solid #d0d0d0; }
.picture { width: 28px; margin: 0 9px 0 15px; }
.charts { width: 240px; }
.charts .caption { padding-left: 38px; }
.recommend-chart { margin: 0 13px 0 15px; }
.chart-grid { display: grid; grid-template-columns: repeat(3, 42px); grid-auto-rows: 26px; margin-top: -1px; }
.chart { display: flex; align-items: center; gap: 6px; }
.chart i { width: 4px; height: 4px; border: solid #333; border-width: 0 1px 1px 0; transform: rotate(45deg); margin-top: -2px; }
.map { width: 32px; padding-top: 2px; }

.menu-anchor { position: relative; z-index: 5; }
.shapes-button {
  display: flex; align-items: center; gap: 3px;
  width: 69px; height: 24px; margin-top: -1px; padding: 0 0 1px 3px;
  border: 1px solid #666; border-radius: 5px; background: #ededed;
}
.smartart { display: flex; align-items: center; gap: 4px; height: 21px; margin-left: 38px; }
.callout-box { position: absolute; inset: -8px -5px -6px -4px; border: 2px solid #f73b3b; border-radius: 3px; z-index: 2; }

.menu {
  position: absolute; top: 100%; left: 0; width: 309px; height: 609px;
  padding-left: 1px;
  border: 1px solid #606060; border-radius: 5px; background: #fff;
  box-shadow: 0 4px 10px rgba(0, 0, 0, .2);
}
.menu-body { display: flex; height: 596px; overflow: hidden; border-radius: 0 4px 0 0; }
.menu-list { width: 288px; overflow: hidden; }
.scrollbar { display: flex; flex-direction: column; align-items: center; width: 17px; padding: 6px 0 5px; background: #f3f3f3; }
.thumb { width: 9px; height: 406px; margin: 4px 0 auto; background: #707070; }
.grip { display: flex; justify-content: flex-end; padding: 2px 4px 0 0; }

.shape-section { padding-bottom: 9px; border-top: 1px solid #d0d0d0; }
.shape-section:first-child { border-top: 0; }
.shape-section h2 { height: 31px; margin: 0; padding-left: 14px; font-size: 12px; font-weight: 700; line-height: 31px; }
.shape-grid { display: grid; grid-template-columns: repeat(12, 24px); grid-auto-rows: 24px; }
.shape { display: grid; place-items: center; }
.shape svg { overflow: visible; }
.hovered { position: relative; z-index: 2; border: 1px solid #c4c4c4; background: #f0f0f0; }
.shape-mark { position: absolute; inset: -7px -5px -4px -4px; border: 2px solid #f73b3b; border-radius: 3px; }
.tip {
  position: absolute; top: 34px; left: 13px; width: 34px; height: 28px;
  border: 1px solid #606060; border-radius: 4px; background: #fff; color: #555;
  line-height: 26px; text-align: center; box-shadow: 0 4px 8px rgba(0, 0, 0, .18);
}
.outline { fill: #fafafa; stroke: #3a3a3a; stroke-width: 1; }
.outline.open { fill: none; }
.outline.soft { stroke: #858585; }
.corner { fill: #fff; stroke: #2b8fc9; }
.box-letter { fill: #2b8fc9; font-size: 10px; font-weight: 700; text-anchor: middle; }
.num { fill: #555; font-family: "Liberation Sans", sans-serif; font-size: 8px; text-anchor: middle; }

.formula-bar { display: flex; flex: none; align-items: center; height: 28px; margin: 8px 0 8px 8px; }
.name-box, .fx-box, .formula { height: 28px; border: 1px solid #d4d4d4; border-radius: 4px; background: #fff; }
.name-box { display: flex; align-items: center; width: 102px; padding: 0 5px 0 6px; }
.name-box input { flex: 1; padding: 0; background: none; color: #333; font-family: "Noto Sans", sans-serif; font-size: 13px; }
.dots { margin: 0 9px; }
.fx-box { display: flex; align-items: center; gap: 10px; width: 74px; padding-left: 6px; }
.fx { color: #333; font-family: "Liberation Serif", serif; font-size: 19px; font-style: italic; line-height: 24px; }
.formula { flex: 1; margin-left: 4px; border-right: 0; border-radius: 4px 0 0 4px; }

.sheet { display: flex; flex: 1; flex-direction: column; min-height: 0; }
.col-heads { display: flex; flex: none; height: 20px; border-bottom: 1px solid #a6a6a6; color: #555; }
.corner-head { display: flex; justify-content: flex-end; width: 29px; flex: none; padding: 4px 3px 0 0; border-right: 1px solid #d0d0d0; }
.col-head { width: 89px; flex: none; border-right: 1px solid #d0d0d0; font-size: 14px; line-height: 22px; text-align: center; }
.grid-body { display: flex; flex: 1; min-height: 0; overflow: hidden; background: #fff; }
.row-heads { flex: none; width: 29px; border-right: 1px solid #a6a6a6; background: #f0f0f0; }
.row-head {
  display: flex; align-items: flex-end; justify-content: center; height: 21px;
  border-bottom: 1px solid #d6d6d6; color: #444;
  font-family: Roboto, sans-serif; font-size: 15px; font-weight: 300; line-height: 16px;
}
.r3 { height: 29px; }
.r4 { height: 37px; }
.r5 { height: 27px; }
.current { border-right: 2px solid #107c41; background: #e0e0e0; color: #107c41; }
.canvas { position: relative; flex: 1; }
.disc { position: absolute; border: 1px solid #203864; border-radius: 50%; background: #4472c4; }
.small { left: 88px; top: 70px; width: 65px; height: 65px; }
.medium { left: 177px; top: 97px; width: 156px; height: 156px; }
.large { left: 59px; top: 232px; width: 141px; height: 141px; }

footer { flex: none; }
.sheet-tabs { display: flex; height: 32px; padding-left: 28px; border-top: 1px solid #dadada; }
.nav-arrow { display: grid; place-items: center; width: 8px; margin-right: 24px; height: 30px; }
.nav-arrow:nth-child(2) { margin-right: 47px; }
.nav-arrow path { fill: none; stroke: #999; stroke-width: 1.2; }
.sheet-tab { height: 28px; padding: 0 17px; font-size: 14px; line-height: 24px; }
.sheet-tab.active { margin-top: -1px; padding: 0 9px; height: 29px; border: 1px solid #d6d6d6; border-top: 0; border-radius: 0 0 5px 5px; background: #fff; }
.sheet-tab span { display: block; }
.sheet-tab.active span { border-bottom: 2px solid #107c41; }
.status { display: flex; align-items: center; height: 22px; padding-left: 12px; border-top: 1px solid #fafafa; background: #f3f3f3; }
.status svg:first-of-type { margin-left: 19px; }
.status svg:last-of-type { margin: 0 3px 0 17px; }
.desktop { height: 5px; border-top: 1px solid #a9b7be; background: #cbe5f2; }
</style>
